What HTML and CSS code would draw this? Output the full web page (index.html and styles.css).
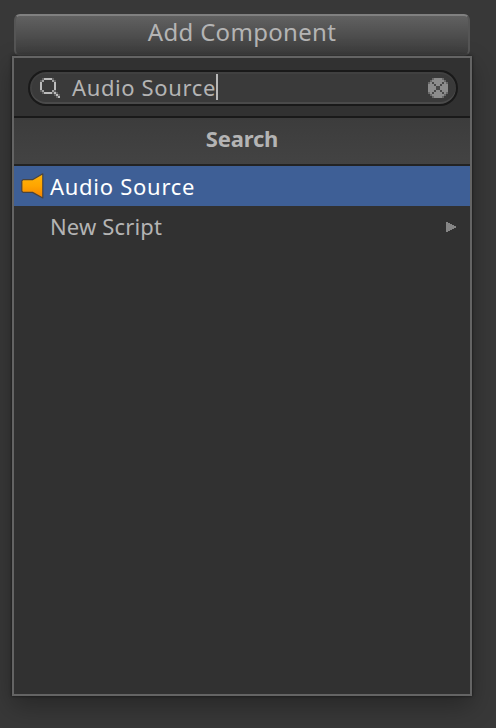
FILE: index.html
```html
<!DOCTYPE html>
<html lang="en">
<head>
<meta charset="utf-8">
<title>Add Component</title>
<link rel="stylesheet" href="styles.css">
</head>
<body>
<button class="add-button"><span>Add Component</span></button>
<main class="popup">
  <div class="search-bar">
    <div class="search-field">
      <svg class="magnifier" width="22" height="22" viewBox="0 0 11 11" shape-rendering="crispEdges">
        <path fill="#bcbcbc" d="M2 0h4v1H2zM0 2h1v4H0zM7 2h1v4H7zM2 7h4v1H2zM7 7h1v1H7zM8 8h1v1H8zM9 9h1v1H9z"/>
        <path fill="#a0a0a0" d="M1 1h1v1H1zM6 1h1v1H6zM1 6h1v1H1zM6 6h1v1H6z"/>
        <path fill="#626262" d="M1 0h1v1H1zM6 0h1v1H6zM0 1h1v1H0zM7 1h1v1H7zM0 6h1v1H0zM7 6h1v1H7zM1 7h1v1H1zM6 7h1v1H6zM8 7h1v1H8zM7 8h1v1H7zM9 8h1v1H9zM8 9h1v1H8z"/>
      </svg>
      <span class="query">Audio Source</span><i class="caret"></i>
      <svg class="clear" width="20" height="20" viewBox="0 0 10 10" shape-rendering="crispEdges">
        <path fill="#8c8c8c" d="M3 0h4v1h1v1h1v1h1v4H9v1H8v1H7v1H3V9H2V8H1V7H0V3h1V2h1V1h1z"/>
        <path fill="#686868" d="M2 0h1v1H2zM7 0h1v1H7zM1 1h1v1H1zM8 1h1v1H8zM0 2h1v1H0zM9 2h1v1H9zM0 7h1v1H0zM9 7h1v1H9zM1 8h1v1H1zM8 8h1v1H8zM2 9h1v1H2zM7 9h1v1H7z"/>
        <path fill="#484848" d="M2 2h1v1H2zM7 2h1v1H7zM3 3h1v1H3zM6 3h1v1H6zM4 4h2v2H4zM3 6h1v1H3zM6 6h1v1H6zM2 7h1v1H2zM7 7h1v1H7z"/>
      </svg>
    </div>
  </div>
  <h1 class="heading"><span>Search</span></h1>
  <div class="row selected">
    <svg class="speaker" width="24" height="28" viewBox="0 0 24 28">
      <defs><linearGradient id="orange" x2="0" y2="1"><stop stop-color="#ffb60a"/><stop offset=".5" stop-color="#ffa500"/><stop offset="1" stop-color="#f58200"/></linearGradient></defs>
      <path fill="url(#orange)" stroke="#4a4440" stroke-width="1.2" stroke-linejoin="round" d="M2 7.7H11.5L21.8 1.8V26L11.5 20.4H2L.8 19.2V8.9z"/>
    </svg>
    <span class="label">Audio Source</span>
  </div>
  <div class="row">
    <span class="label script">New Script</span>
    <svg class="arrow" width="10" height="12" viewBox="0 0 10 12"><path fill="#858585" d="M0 1h2v1h2v1h2v1h2v1h2v2H8v1H6v1H4v1H2v1H0z"/></svg>
  </div>
</main>
</body>
</html>
```
FILE: styles.css
```css
* { box-sizing: border-box; }
body {
  margin: 0;
  height: 728px;
  padding: 14px 24px 0 12px;
  overflow: hidden;
  background: #383838;
  font-family: "Noto Sans", sans-serif;
  color: #b4b4b4;
}
.add-button {
  display: flex;
  justify-content: center;
  width: 456px;
  height: 42px;
  margin: 0 0 0 2px;
  padding: 0;
  border: 2px solid #555;
  border-top-color: #808080;
  border-bottom-color: #444;
  border-radius: 6px;
  background: linear-gradient(#616161, #3c3c3c);
  color: #b4b4b4;
  font: 24px/32px "Noto Sans", sans-serif;
  letter-spacing: 0.3px;
  white-space: nowrap;
}
.add-button span { height: 36px; }
.popup {
  position: relative;
  width: 460px;
  height: 640px;
  border: 2px solid #646464;
  background: #313131;
  box-shadow: 0 0 3px rgba(0,0,0,.6), 0 10px 24px rgba(0,0,0,.3);
}
.search-bar {
  height: 60px;
  padding: 12px 12px 0 14px;
  border-bottom: 2px solid #191919;
}
.search-field {
  display: flex;
  align-items: center;
  height: 36px;
  padding: 0 8px 0 10px;
  border: 2px solid #191919;
  border-radius: 18px;
  background: #3a3a3a;
  box-shadow: inset 0 2px #404040, inset 0 -2px #4a4a4a, inset 2px 0 #404040;
}
.magnifier { margin-top: 2px; }
.query {
  margin: 0 0 3px 10px;
  font-size: 22px;
  line-height: 30px;
  letter-spacing: 0.62px;
  white-space: nowrap;
}
.caret { width: 2px; height: 26px; margin-bottom: 2px; background: #b8b8b8; }
.clear { margin-left: auto; }
.heading {
  display: flex;
  justify-content: center;
  height: 48px;
  margin: 0;
  border-bottom: 2px solid #232323;
  background: linear-gradient(#3c3c3c, #434343);
  font-size: 22px;
  line-height: 41px;
  letter-spacing: -0.2px;
}
.row {
  display: flex;
  align-items: center;
  height: 40px;
  padding: 0 14px 0 7px;
}
.selected { background: #3e5f96; color: #fff; }
.label {
  margin-left: 5px;
  font-size: 22px;
  line-height: 40px;
  letter-spacing: 0.73px;
  white-space: nowrap;
}
.script { margin-left: 29px; letter-spacing: 0.15px; }
.arrow { margin: 2px 0 0 auto; }
```
